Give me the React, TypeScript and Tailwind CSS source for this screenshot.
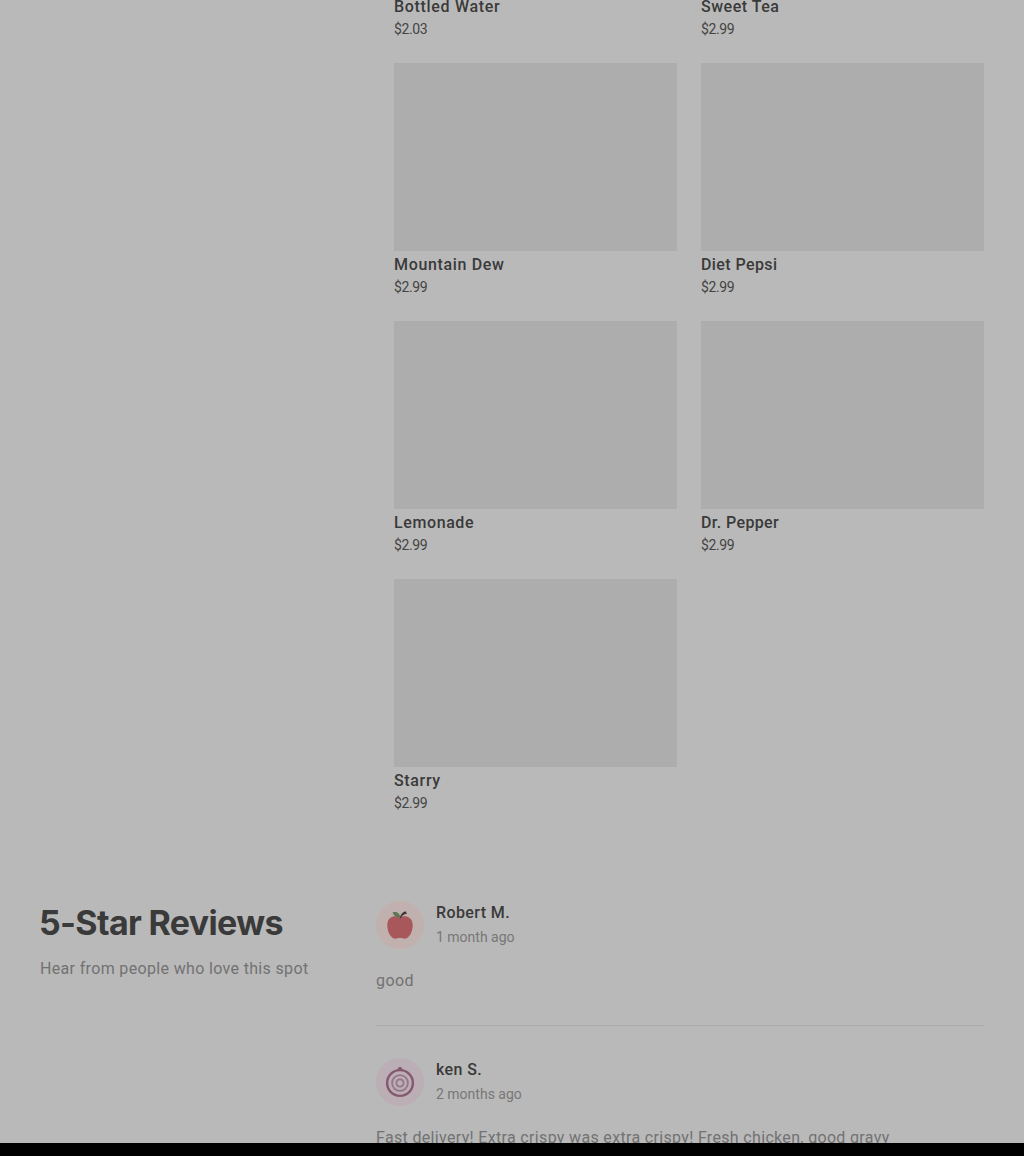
const items = [
  { name: "Mountain Dew", price: "$2.99", track: "tracking-[0.66px]" },
  { name: "Diet Pepsi", price: "$2.99", track: "tracking-[0.4px]" },
  { name: "Lemonade", price: "$2.99", track: "tracking-[0.6px]" },
  { name: "Dr. Pepper", price: "$2.99", track: "tracking-[0.38px]" },
  { name: "Starry", price: "$2.99", track: "tracking-[0.65px]" },
];

function Label({ name, price, track }: { name: string; price: string; track: string }) {
  return (
    <>
      <h3 className={`mt-0.5 text-base leading-6 font-medium whitespace-nowrap text-[#3a3a3a] ${track}`}>{name}</h3>
      <p className="text-sm leading-5 tracking-[-0.4px] text-[#444444]">{price}</p>
    </>
  );
}

function Apple() {
  return (
    <svg viewBox="0 0 48 48" className="size-12 shrink-0">
      <circle cx="24" cy="24" r="24" fill="#c1b1ae" />
      <path d="M23.5 16.5C21 14.3 11.5 14 11.3 24C11.2 31 15 37.5 19 37.7C21 37.8 22 36.8 24 36.8S27 37.8 29 37.7C33 37.5 36.8 31 36.7 24C36.5 14 26.5 14.3 23.5 16.5Z" fill="#a8575b" />
      <path d="M23.6 17.2C24.2 13.8 26 11.3 29.6 10.2L31 12.7C27.5 13.4 25.7 14.5 24.8 17.2Z" fill="#423638" />
      <path d="M16.6 11.2C20.8 10.2 24 12 24.2 16.4C20 16.8 17.6 14.6 16.6 11.2Z" fill="#5c7854" />
    </svg>
  );
}

function Onion() {
  return (
    <svg viewBox="0 0 48 48" className="size-12 shrink-0" fill="none" stroke="#85586f">
      <circle cx="24" cy="24" r="24" fill="#bbaeb5" stroke="none" />
      <path d="M21.2 12.2L22.5 9.5L24 8.8L25.5 9.5L26.8 12.2Z" fill="#85586f" stroke="none" />
      <circle cx="24" cy="25" r="12.9" strokeWidth="2.4" fill="#bbaeb5" />
      <circle cx="24" cy="25" r="7.9" strokeWidth="1.8" stroke="#967489" />
      <circle cx="24" cy="25" r="3.6" strokeWidth="1.9" stroke="#967489" />
    </svg>
  );
}

export default function App() {
  return (
    <div className="h-[1156px] overflow-hidden bg-black font-['Roboto',sans-serif]">
      <main className="h-[1143px] overflow-hidden bg-[#b9b9b9]">
        <section className="-mt-[7px] ml-[394px] grid w-[590px] grid-cols-2 gap-6">
          <article>
            <Label name="Bottled Water" price="$2.03" track="tracking-[0.68px]" />
          </article>
          <article>
            <Label name="Sweet Tea" price="$2.99" track="tracking-[0.5px]" />
          </article>
          {items.map((item) => (
            <article key={item.name}>
              <div className="h-[188px] bg-[#adadad]" />
              <Label {...item} />
            </article>
          ))}
        </section>

        <section className="mt-[88px] flex pr-10 pl-10">
          <header className="w-[336px] shrink-0">
            <h2 className="-ml-px font-['Inter',sans-serif] text-[34px] leading-[44px] font-bold tracking-[-0.66px] whitespace-nowrap text-[#3a3a3a]">5-Star Reviews</h2>
            <p className="mt-3 text-base leading-6 tracking-[0.34px] text-[#727272]">Hear from people who love this spot</p>
          </header>
          <div className="min-w-0 flex-1">
            <article className="h-[125px] border-b border-[#adadad]">
              <div className="flex gap-3">
                <Apple />
                <div>
                  <h3 className="text-base leading-6 font-medium tracking-[0.4px] text-[#3a3a3a]">Robert M.</h3>
                  <p className="mt-0.5 text-sm leading-5 text-[#777777]">1 month ago</p>
                </div>
              </div>
              <p className="mt-5 text-base leading-6 tracking-[0.4px] text-[#727272]">good</p>
            </article>
            <article className="mt-8">
              <div className="flex gap-3">
                <Onion />
                <div>
                  <h3 className="text-base leading-6 font-medium tracking-[0.4px] text-[#3a3a3a]">ken S.</h3>
                  <p className="mt-0.5 text-sm leading-5 text-[#777777]">2 months ago</p>
                </div>
              </div>
              <p className="mt-5 text-base leading-6 tracking-[0.33px] whitespace-nowrap text-[#727272]">
                Fast delivery! Extra crispy was extra crispy! Fresh chicken, good gravy
              </p>
            </article>
          </div>
        </section>
      </main>
    </div>
  );
}
